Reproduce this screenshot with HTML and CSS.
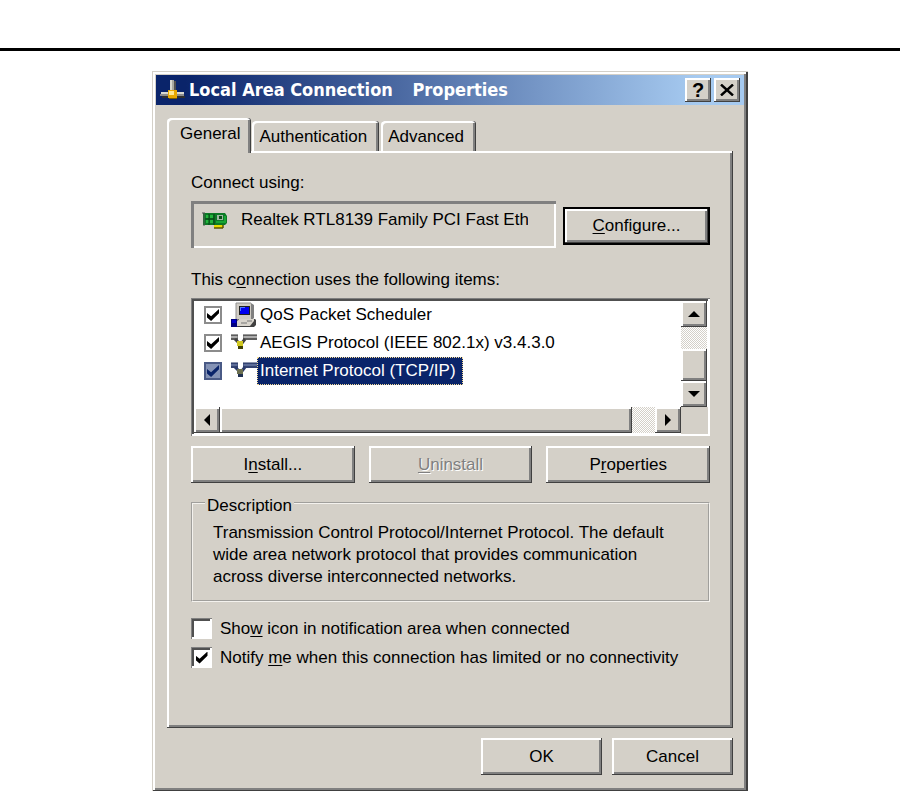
FILE: index.html
```html
<!DOCTYPE html>
<html lang="en">
<head>
  <meta charset="UTF-8" />
  <meta name="viewport" content="width=device-width, initial-scale=1.0" />
  <title>Local Area Connection Properties</title>
  <link rel="stylesheet" href="styles.css">
</head>

<body>
  <hr class="rule" />

  <main class="window" role="dialog" aria-labelledby="windowTitle">
    <header class="titlebar">
      <svg class="title-icon" width="26" height="20" viewBox="0 0 26 20" aria-hidden="true">
        <rect x="10" y="0" width="4" height="11" fill="#a8a8a0"/>
        <rect x="10" y="0" width="2" height="11" fill="#d8d8d0"/>
        <rect x="14" y="1" width="2" height="10" fill="#505050"/>
        <rect x="1" y="12" width="23" height="2" fill="#d8d8d0"/>
        <rect x="0" y="14" width="24" height="2" fill="#8c8c8c"/>
        <rect x="2" y="16" width="23" height="2" fill="#303030"/>
        <rect x="8" y="10" width="9" height="8" fill="#e8a800"/>
        <rect x="9" y="11" width="5" height="4" fill="#ffe890"/>
        <rect x="9" y="18" width="8" height="1" fill="#7a5a00"/>
      </svg>
      <h1 id="windowTitle">Local Area Connection <span>Properties</span></h1>
      <button type="button" class="btn caption-btn" aria-label="Help">?</button>
      <button type="button" class="btn caption-btn" aria-label="Close">
        <svg width="14" height="12" viewBox="0 0 14 12" aria-hidden="true">
          <path d="M1 0.5L13 11.5M13 0.5L1 11.5" stroke="#000" stroke-width="2.4"/>
        </svg>
      </button>
    </header>

    <div class="tabs" role="tablist">
      <button type="button" role="tab" class="tab active" aria-selected="true">General</button>
      <button type="button" role="tab" class="tab" aria-selected="false">Authentication</button>
      <button type="button" role="tab" class="tab" aria-selected="false">Advanced</button>
    </div>

    <section class="panel" role="tabpanel">
      <p class="caption">Connect using:</p>
      <div class="adapter-row">
        <div class="adapter">
          <svg width="26" height="18" viewBox="0 0 26 18" aria-hidden="true">
            <path d="M1 1h22l2 3v7l-2 2H3L1 13z" fill="#0c7a26"/>
            <path d="M0 1h3M2 1v13" stroke="#555" stroke-width="1"/>
            <path d="M4 3h3v3H4zM8 3h3v3H8zM4 8h3v3H4zM8 8h3v3H8z" fill="#23b53c"/>
            <path d="M7 2v11M3 7h9M12 2v11" stroke="#063f12" stroke-width="1"/>
            <rect x="15" y="3" width="6" height="5" fill="#9fb8a4"/>
            <rect x="17" y="4" width="3" height="3" fill="#0a4d18"/>
            <path d="M14 10h8M23 4v7" stroke="#23d040" stroke-width="1"/>
            <rect x="12" y="13" width="9" height="3" fill="#e6dc00"/>
            <path d="M12 16h9M21 13v3" stroke="#5a5600" stroke-width="1.5"/>
          </svg>
          <span>Realtek RTL8139 Family PCI Fast Eth</span>
        </div>
        <button type="button" class="btn default"><u>C</u>onfigure...</button>
      </div>

      <p class="caption">This c<u>o</u>nnection uses the following items:</p>
      <div class="listbox">
        <ul class="items">
          <li>
            <input type="checkbox" id="qos" class="flat-check" checked />
            <svg width="26" height="26" viewBox="0 0 26 26" aria-hidden="true">
              <path d="M6 1h14l3 2v13l-3 3H6z" fill="#808080"/>
              <rect x="5" y="1" width="15" height="16" fill="#d0ccc4"/>
              <path d="M5 17V1h15" fill="none" stroke="#909090"/>
              <rect x="8" y="4" width="11" height="9" fill="#202020"/>
              <rect x="9" y="5" width="9" height="7" fill="#0000f0"/>
              <path d="M9 5h5v1h-4v3H9z" fill="#5078ff"/>
              <path d="M7 17h17l1 1v5l-2 2H6z" fill="#404040"/>
              <path d="M8 17h15v2l-4 5H6v-4z" fill="#d8d4cc"/>
              <path d="M10 21h6M16 19h5" stroke="#777"/>
              <path d="M0 17h6v8H0z" fill="#000080"/>
              <path d="M1 18h4v3H1z" fill="#0000d0"/>
            </svg>
            <label for="qos">QoS Packet Scheduler</label>
          </li>
          <li>
            <input type="checkbox" id="aegis" class="flat-check" checked />
            <svg width="26" height="26" viewBox="0 0 26 26" aria-hidden="true">
              <path d="M0 5h7v5H0zM12 5h14v5H12z" fill="#8a8a8a"/>
              <path d="M0 5h7M12 5h14M0 9h7M12 9h14" stroke="#303030"/>
              <path d="M0 7h6M13 7h13" stroke="#d0d0d0"/>
              <path d="M4 9l4 4M14 9l-3 4" stroke="#404040" stroke-width="3"/>
              <rect x="7" y="12" width="5" height="7" fill="#404000"/>
              <rect x="6" y="11" width="6" height="5" fill="#d0c820"/>
            </svg>
            <label for="aegis">AEGIS Protocol (IEEE 802.1x) v3.4.3.0</label>
          </li>
          <li class="selected">
            <input type="checkbox" id="tcpip" class="flat-check" checked />
            <svg width="26" height="26" viewBox="0 0 26 26" aria-hidden="true">
              <path d="M0 5h7v5H0zM12 5h14v5H12z" fill="#4a5a86"/>
              <path d="M0 5h7M12 5h14M0 9h7M12 9h14" stroke="#1c2c5c"/>
              <path d="M0 7h6M13 7h13" stroke="#7080a8"/>
              <path d="M4 9l4 4M14 9l-3 4" stroke="#2c3c6c" stroke-width="3"/>
              <rect x="7" y="12" width="5" height="7" fill="#203050"/>
              <rect x="6" y="11" width="6" height="5" fill="#6c7050"/>
            </svg>
            <label for="tcpip">Internet Protocol (TCP/IP)</label>
          </li>
        </ul>
        <div class="scroll-v">
          <button type="button" class="btn arrow" aria-label="Scroll up"><svg width="12" height="6" viewBox="0 0 12 6"><path d="M6 0l6 6H0z"/></svg></button>
          <div class="track"></div>
          <div class="btn thumb"></div>
          <button type="button" class="btn arrow" aria-label="Scroll down"><svg width="12" height="6" viewBox="0 0 12 6"><path d="M6 6l6-6H0z"/></svg></button>
        </div>
        <div class="scroll-h">
          <button type="button" class="btn arrow" aria-label="Scroll left"><svg width="6" height="12" viewBox="0 0 6 12"><path d="M0 6l6-6v12z"/></svg></button>
          <div class="btn thumb"></div>
          <div class="track"></div>
          <button type="button" class="btn arrow" aria-label="Scroll right"><svg width="6" height="12" viewBox="0 0 6 12"><path d="M6 6L0 0v12z"/></svg></button>
        </div>
      </div>

      <div class="actions">
        <button type="button" class="btn">I<u>n</u>stall...</button>
        <button type="button" class="btn" disabled><u>U</u>ninstall</button>
        <button type="button" class="btn">P<u>r</u>operties</button>
      </div>

      <fieldset class="group">
        <legend>Description</legend>
        <p>Transmission Control Protocol/Internet Protocol. The default wide area network protocol that provides communication across diverse interconnected networks.</p>
      </fieldset>

      <div class="option">
        <input type="checkbox" id="showIcon" class="check" />
        <label for="showIcon">Sho<u>w</u> icon in notification area when connected</label>
      </div>
      <div class="option">
        <input type="checkbox" id="notify" class="check" checked />
        <label for="notify">Notify <u>m</u>e when this connection has limited or no connectivity</label>
      </div>
    </section>

    <footer class="footer">
      <button type="button" class="btn">OK</button>
      <button type="button" class="btn">Cancel</button>
    </footer>
  </main>
</body>
</html>
```
FILE: styles.css
```css
:root {
  --face: #d4d0c8;
  --light: #ffffff;
  --shadow: #808080;
  --dark: #404040;
  --navy: #0a246a;
}

* {
  box-sizing: border-box;
}

body {
  margin: 0;
  background: #fff;
  color: #000;
  font-family: "Liberation Sans", Arial, sans-serif;
  font-size: 17px;
  line-height: 22px;
}

p, h1, ul {
  margin: 0;
  padding: 0;
}

u {
  text-underline-offset: 2px;
}

.rule {
  height: 3px;
  margin: 48px 0 20px;
  border: 0;
  background: #000;
}

.window {
  max-width: 596px;
  margin: 0 auto;
  padding: 4px 4px 17px;
  background: var(--face);
  box-shadow: inset 1px 1px var(--face), inset -2px -2px var(--dark),
    inset 3px 3px var(--light), inset -4px -4px var(--shadow);
}

/* Buttons */
.btn {
  display: flex;
  align-items: center;
  justify-content: center;
  padding: 0;
  border: 0;
  background: var(--face);
  color: #000;
  font: inherit;
  white-space: pre;
  box-shadow: inset -1px -1px var(--dark), inset 2px 2px var(--light),
    inset -3px -3px var(--shadow);
}

.btn:disabled {
  color: var(--shadow);
  text-shadow: 1px 1px var(--light);
}

.btn.default {
  border: 2px solid #000;
}

/* Title bar */
.titlebar {
  display: flex;
  align-items: center;
  gap: 3px;
  height: 30px;
  padding: 0 4px;
  background: linear-gradient(to right, var(--navy) 5%, #a6caf0 92%);
}

.titlebar h1 {
  flex: 1;
  color: #fff;
  font-family: "DejaVu Sans Condensed", "Open Sans", sans-serif;
  font-size: 18px;
  font-weight: 700;
  white-space: nowrap;
}

.titlebar h1 span {
  margin-left: 14px;
}

.caption-btn {
  width: 26px;
  height: 24px;
  font-size: 20px;
  font-weight: 700;
}

/* Tabs */
.tabs {
  display: flex;
  align-items: flex-end;
  gap: 2px;
  padding: 13px 11px 0;
}

.tab {
  height: 30px;
  padding: 2px 12px 0 7px;
  border: 0;
  border-radius: 4px 3px 0 0;
  background: var(--face);
  color: #000;
  font: inherit;
  box-shadow: inset -1px 0 var(--dark), inset 2px 2px var(--light),
    inset -3px 0 var(--shadow);
}

.tab.active {
  z-index: 1;
  height: 35px;
  margin: 0 -1px -2px 0;
  padding: 0 11px 4px 13px;
}

.panel {
  margin: 0 11px;
  padding: 21px 23px 56px 24px;
  box-shadow: inset -1px -1px var(--dark), inset 2px 2px var(--light),
    inset -3px -3px var(--shadow);
}

.caption {
  margin-bottom: 7px;
}

.adapter-row {
  display: flex;
  align-items: center;
  gap: 7px;
  margin-bottom: 21px;
}

.adapter {
  flex: 1;
  display: flex;
  align-items: flex-start;
  gap: 13px;
  min-width: 0;
  height: 47px;
  padding: 8px 28px 0 11px;
  box-shadow: inset 3px 3px var(--shadow), inset -2px -2px var(--light);
}

.adapter svg {
  flex: none;
  margin-top: 3px;
}

.adapter span {
  overflow: hidden;
  white-space: nowrap;
}

.adapter-row .btn {
  width: 147px;
  height: 38px;
  margin-top: 2px;
}

/* List of components */
.listbox {
  display: grid;
  grid-template-columns: 1fr 26px;
  grid-template-rows: 106px 26px;
  padding: 3px;
  background: linear-gradient(var(--face), var(--face)) right bottom / 29px 29px no-repeat #fff;
  box-shadow: inset 1px 1px var(--shadow), inset -2px -2px var(--light),
    inset 3px 3px #505050;
}

.items {
  overflow: hidden;
  list-style: none;
}

.items li {
  display: flex;
  align-items: center;
  height: 28px;
  padding-left: 10px;
}

.items svg {
  margin: 0 0 0 9px;
}

.items label {
  padding: 2px 2px;
  border: 1px solid transparent;
  white-space: nowrap;
}

.items .selected label {
  padding-right: 6px;
  border: 1px dotted #f5db95;
  background: var(--navy);
  color: #fff;
}

.scroll-v, .scroll-h {
  display: flex;
}

.scroll-v {
  flex-direction: column;
}

.arrow {
  flex: none;
  width: 26px;
  height: 26px;
}

.track {
  background: repeating-conic-gradient(#fff 0 25%, var(--face) 0 50%) 0 0 / 2px 2px;
}

.scroll-v .track {
  flex: 1;
}

.scroll-v .thumb {
  height: 32px;
}

.scroll-h .thumb {
  flex: 1;
}

.scroll-h .track {
  width: 23px;
}

/* Check boxes */
.check, .flat-check {
  appearance: none;
  flex: none;
  display: grid;
  place-items: center;
  margin: 0;
  background: #fff;
}

.check {
  width: 21px;
  height: 21px;
  box-shadow: inset 1px 1px var(--shadow), inset -2px -2px var(--light),
    inset 3px 3px #505050;
}

.flat-check {
  width: 18px;
  height: 18px;
  border: 2px solid #8c8c8c;
}

.check:checked::before, .flat-check:checked::before {
  content: "";
  width: 12px;
  height: 12px;
  background: #000;
  clip-path: polygon(0 34%, 34% 60%, 100% 0, 100% 36%, 34% 100%, 0 70%);
}

.selected .flat-check {
  border-color: #4a5a86;
  background: #8492b5;
}

.selected .flat-check:checked::before {
  background: var(--navy);
}

.actions {
  display: flex;
  gap: 14px;
  margin: 10px 0 6px;
}

.actions .btn {
  flex: 1;
  height: 37px;
}

.group {
  margin: 0 0 12px;
  padding: 5px 20px 12px;
  border: 2px groove #f4f2ee;
}

.group legend {
  margin-left: -8px;
  padding: 6px 2px 0;
}

.option {
  display: flex;
  align-items: center;
  gap: 8px;
  height: 29px;
}

.footer {
  display: flex;
  justify-content: flex-end;
  gap: 10px;
  padding: 10px 11px 0;
}

.footer .btn {
  width: 121px;
  height: 37px;
}
```
